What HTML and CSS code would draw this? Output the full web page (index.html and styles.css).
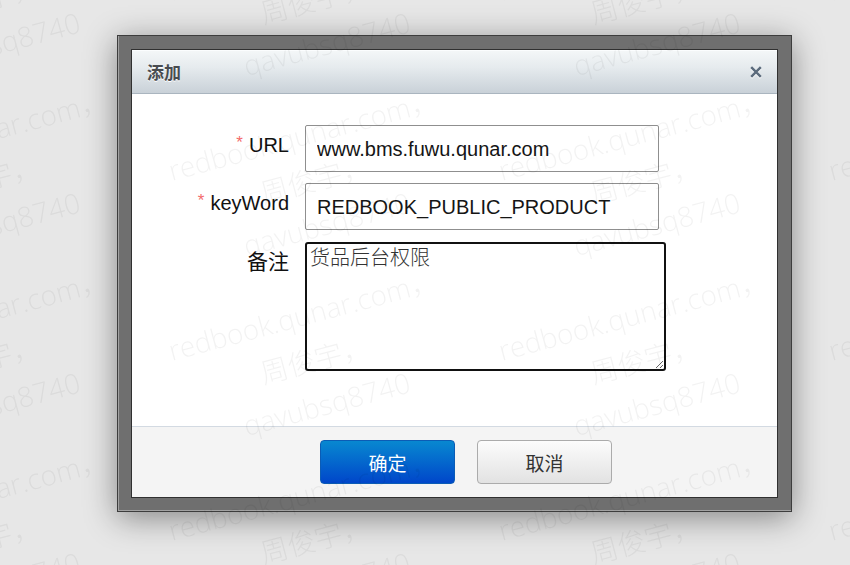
FILE: index.html
```html
<!DOCTYPE html>
<html lang="zh-CN">
<head>
<meta charset="utf-8">
<title>添加</title>
<link rel="stylesheet" href="styles.css">
</head>
<body>
<div class="modal">
  <div class="dialog">
    <div class="dlg-head">
      <span class="dlg-title">添加</span>
      <button class="dlg-close" type="button" aria-label="关闭">
        <svg width="12" height="12" viewBox="0 0 12 12"><path d="M1.2 1.2 L10.8 10.8 M10.8 1.2 L1.2 10.8" stroke="#5b6b7c" stroke-width="2.4" stroke-linecap="butt" fill="none"/></svg>
      </button>
    </div>
    <div class="dlg-body">
      <form class="form">
        <label class="lbl"><span class="req">*</span>URL</label>
        <input class="ipt" type="text" value="www.bms.fuwu.qunar.com">
        <label class="lbl"><span class="req">*</span>keyWord</label>
        <input class="ipt" type="text" value="REDBOOK_PUBLIC_PRODUCT">
        <label class="lbl lbl-cn">备注</label>
        <textarea class="ta">货品后台权限</textarea>
      </form>
    </div>
    <div class="dlg-foot">
      <button class="btn btn-primary" type="button">确定</button>
      <button class="btn btn-default" type="button">取消</button>
    </div>
  </div>
</div>
<div class="wm-layer">
  <div class="wm-grid">
    <div class="wm-cell"><div class="wm-text">redbook.qunar.com，<br>周俊宇，<br>qavubsq8740</div></div>
    <div class="wm-cell"><div class="wm-text">redbook.qunar.com，<br>周俊宇，<br>qavubsq8740</div></div>
    <div class="wm-cell"><div class="wm-text">redbook.qunar.com，<br>周俊宇，<br>qavubsq8740</div></div>
    <div class="wm-cell"><div class="wm-text">redbook.qunar.com，<br>周俊宇，<br>qavubsq8740</div></div>
    <div class="wm-cell"><div class="wm-text">redbook.qunar.com，<br>周俊宇，<br>qavubsq8740</div></div>
    <div class="wm-cell"><div class="wm-text">redbook.qunar.com，<br>周俊宇，<br>qavubsq8740</div></div>
    <div class="wm-cell"><div class="wm-text">redbook.qunar.com，<br>周俊宇，<br>qavubsq8740</div></div>
    <div class="wm-cell"><div class="wm-text">redbook.qunar.com，<br>周俊宇，<br>qavubsq8740</div></div>
    <div class="wm-cell"><div class="wm-text">redbook.qunar.com，<br>周俊宇，<br>qavubsq8740</div></div>
    <div class="wm-cell"><div class="wm-text">redbook.qunar.com，<br>周俊宇，<br>qavubsq8740</div></div>
    <div class="wm-cell"><div class="wm-text">redbook.qunar.com，<br>周俊宇，<br>qavubsq8740</div></div>
    <div class="wm-cell"><div class="wm-text">redbook.qunar.com，<br>周俊宇，<br>qavubsq8740</div></div>
    <div class="wm-cell"><div class="wm-text">redbook.qunar.com，<br>周俊宇，<br>qavubsq8740</div></div>
    <div class="wm-cell"><div class="wm-text">redbook.qunar.com，<br>周俊宇，<br>qavubsq8740</div></div>
    <div class="wm-cell"><div class="wm-text">redbook.qunar.com，<br>周俊宇，<br>qavubsq8740</div></div>
    <div class="wm-cell"><div class="wm-text">redbook.qunar.com，<br>周俊宇，<br>qavubsq8740</div></div>
    <div class="wm-cell"><div class="wm-text">redbook.qunar.com，<br>周俊宇，<br>qavubsq8740</div></div>
    <div class="wm-cell"><div class="wm-text">redbook.qunar.com，<br>周俊宇，<br>qavubsq8740</div></div>
    <div class="wm-cell"><div class="wm-text">redbook.qunar.com，<br>周俊宇，<br>qavubsq8740</div></div>
    <div class="wm-cell"><div class="wm-text">redbook.qunar.com，<br>周俊宇，<br>qavubsq8740</div></div>
  </div>
</div>
</body>
</html>
```
FILE: styles.css
```css
html, body {
  margin: 0;
  height: 565px;
  overflow: hidden;
}
body {
  background: #e7e7e7;
  font-family: "Liberation Sans", "Noto Sans CJK SC", sans-serif;
  padding: 35px 0 0 117px;
  box-sizing: border-box;
}

.modal {
  width: 675px;
  box-sizing: border-box;
  background: #6f6f6f;
  border: 1px solid #3d3d3d;
  padding: 13px;
  box-shadow: inset 1px 0 0 #a2a2a2, inset 0 -1px 0 #a2a2a2, 0 6px 30px rgba(0, 0, 0, 0.42);
}

.dialog {
  width: 647px;
  box-sizing: border-box;
  border: 1px solid #303030;
  background: #fff;
}

.dlg-head {
  height: 43px;
  display: flex;
  align-items: center;
  justify-content: space-between;
  padding: 0 15px;
  background: linear-gradient(#f4f7f8 0, #e6ebee 40%, #c9d1d8 100%);
  border-bottom: 1px solid #aab5bf;
  box-shadow: inset 0 1px 0 #fbfdfe;
}
.dlg-title {
  font-family: "Noto Sans CJK SC", sans-serif;
  font-weight: 700;
  font-size: 17px;
  color: #484c50;
  text-shadow: 0 1px 0 #fff;
}
.dlg-close {
  border: 0;
  background: none;
  padding: 0;
  width: 12px;
  height: 12px;
  display: flex;
  filter: drop-shadow(0 1px 0 #fff);
}

.dlg-body {
  padding: 31px 0 55px;
}
.form {
  display: grid;
  grid-template-columns: 157px auto;
  column-gap: 16px;
  row-gap: 11px;
  align-items: start;
}
.lbl {
  text-align: right;
  font-size: 20px;
  line-height: 24px;
  padding-top: 8px;
  color: #111;
}
.lbl-cn {
  font-family: "Noto Sans CJK SC", sans-serif;
  font-size: 21px;
  padding-top: 6px;
  margin-top: 1px;
}
.req {
  color: #f36b6b;
  font-size: 17px;
  line-height: 17px;
  vertical-align: top;
  margin-right: 6px;
  position: relative;
  top: 1px;
}
.ipt {
  width: 354px;
  height: 47px;
  box-sizing: border-box;
  border: 1px solid #8f8f8f;
  border-radius: 2px;
  padding: 2px 11px 0;
  margin: 0;
  font-family: "Liberation Sans", sans-serif;
  font-size: 20px;
  color: #151515;
  background: #fff;
  outline: none;
}
.ta {
  width: 361px;
  height: 129px;
  box-sizing: border-box;
  margin: 1px 0 0;
  border: 2px solid #111;
  border-radius: 3px;
  padding: 0 3px;
  font-family: "Noto Sans CJK SC", sans-serif;
  font-weight: 300;
  font-size: 20px;
  line-height: 26px;
  color: #333;
  outline: none;
  resize: both;
}

.dlg-foot {
  height: 71px;
  box-sizing: border-box;
  border-top: 1px solid #d3dae2;
  background: #f4f4f4;
  display: flex;
  justify-content: center;
  align-items: flex-start;
  gap: 22px;
  padding: 13px 0 0 23px;
}
.btn {
  width: 135px;
  height: 44px;
  box-sizing: border-box;
  border-radius: 4px;
  font-family: "Noto Sans CJK SC", sans-serif;
  font-size: 19px;
  padding: 0;
  cursor: pointer;
}
.btn-primary {
  color: #fff;
  border: 1px solid #0b5cb5;
  background: linear-gradient(#0888d0, #0046ca);
}
.btn-default {
  color: #333;
  border: 1px solid #ababab;
  background: linear-gradient(#fcfcfc, #e2e2e2);
}

.wm-layer {
  position: fixed;
  left: 0;
  top: 0;
  width: 850px;
  height: 565px;
  overflow: hidden;
  pointer-events: none;
  z-index: 10;
}
.wm-grid {
  margin: -91px 0 0 -180px;
  display: grid;
  grid-template-columns: repeat(4, 330px);
  grid-auto-rows: 180px;
  width: 1320px;
}
.wm-cell {
  display: flex;
  align-items: center;
  justify-content: center;
}
.wm-text {
  transform: rotate(-15deg);
  text-align: center;
  white-space: nowrap;
  font-family: "Open Sans", "Noto Sans CJK SC", sans-serif;
  font-weight: 300;
  font-size: 28px;
  line-height: 46px;
  color: rgba(0, 0, 0, 0.05);
}
```
